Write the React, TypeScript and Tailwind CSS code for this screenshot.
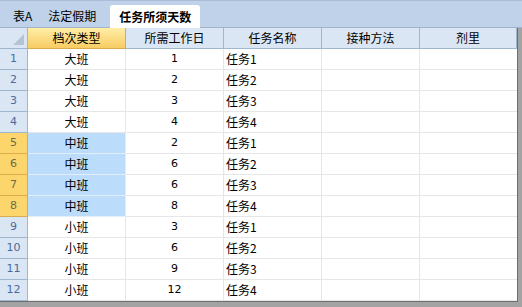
import React from "react";

const rows: [string, string, string][] = [
  ["大班", "1", "任务1"],
  ["大班", "2", "任务2"],
  ["大班", "3", "任务3"],
  ["大班", "4", "任务4"],
  ["中班", "2", "任务1"],
  ["中班", "6", "任务2"],
  ["中班", "6", "任务3"],
  ["中班", "8", "任务4"],
  ["小班", "3", "任务1"],
  ["小班", "6", "任务2"],
  ["小班", "9", "任务3"],
  ["小班", "12", "任务4"],
];

const headers = ["所需工作日", "任务名称", "接种方法", "剂里"];

export default function App() {
  return (
    <div
      className="w-[522px] h-[307px] bg-[#a3a3a3] overflow-hidden flex flex-col text-black"
      style={{ fontFamily: '"Noto Sans CJK SC", "Liberation Sans", sans-serif' }}
    >
      {/* Tab bar */}
      <div className="h-[28px] shrink-0 bg-[#bfd2e9] border-t border-[#a9bdd6] border-b border-b-[#9fb3cb] flex items-end pl-[6px] text-[12px]">
        <div className="h-[22px] px-[7px] flex items-center">表A</div>
        <div className="h-[22px] pl-[9px] pr-[8px] flex items-center">法定假期</div>
        <div className="w-[90px] ml-[6px] bg-white rounded-t-[3px] flex items-center justify-center font-bold mb-[-1px] h-[23px]">
          任务所须天数
        </div>
      </div>
      {/* Grid */}
      <div className="flex shrink-0">
        <div className="w-[518px] border-r border-[#6e6e6e] border-b border-b-[#6e6e6e] bg-white">
          {/* Header row */}
          <div className="flex h-[21px] text-[12px]">
            <div className="w-[28px] h-full bg-[#dbe6f4] border-r border-b border-[#9eb6ce] relative">
              <div className="absolute right-[3px] bottom-[3px] w-0 h-0 border-l-[11px] border-l-transparent border-b-[11px] border-b-[#b5c3d3]" />
            </div>
            <div className="w-[98px] h-full bg-gradient-to-b from-[#ffeea6] to-[#f7cc62] border-r border-b border-[#d9ad4a] flex items-center justify-center">
              档次类型
            </div>
            {headers.map((h, i) => (
              <div
                key={h}
                className={`${i === 3 ? "w-[97px]" : "w-[98px]"} h-full bg-[#dbe6f4] border-r border-b border-[#9eb6ce] flex items-center justify-center`}
              >
                {h}
              </div>
            ))}
          </div>
          {rows.map((r, idx) => {
            const sel = idx >= 4 && idx <= 7;
            return (
              <div key={idx} className="flex h-[21px] text-[12px]">
                <div
                  className={`w-[28px] h-full border-r border-b flex items-center justify-center text-[11px] ${
                    sel
                      ? "bg-[#fcd66c] border-[#d9ad4a] text-[#6b6b4a]"
                      : "bg-[#dbe6f4] border-[#9eb6ce] text-[#4a6c98]"
                  }`}
                  style={{ fontFamily: '"DejaVu Sans", sans-serif' }}
                >
                  {idx + 1}
                </div>
                <div
                  className={`w-[98px] h-full border-r border-b flex items-center justify-center ${
                    sel ? "bg-[#bcdcfb] border-[#e4eef8]" : "bg-white border-[#e6e6e6]"
                  }`}
                >
                  {r[0]}
                </div>
                <div
                  className="w-[98px] h-full border-r border-b border-[#e6e6e6] flex items-center justify-center text-[11px]"
                  style={{ fontFamily: '"DejaVu Sans", sans-serif' }}
                >
                  {r[1]}
                </div>
                <div className="w-[98px] h-full border-r border-b border-[#e6e6e6] flex items-center pl-[2px]">
                  {r[2]}
                </div>
                <div className="w-[98px] h-full border-r border-b border-[#e6e6e6]" />
                <div className="w-[97px] h-full border-b border-[#e6e6e6]" />
              </div>
            );
          })}
        </div>
      </div>
    </div>
  );
}
